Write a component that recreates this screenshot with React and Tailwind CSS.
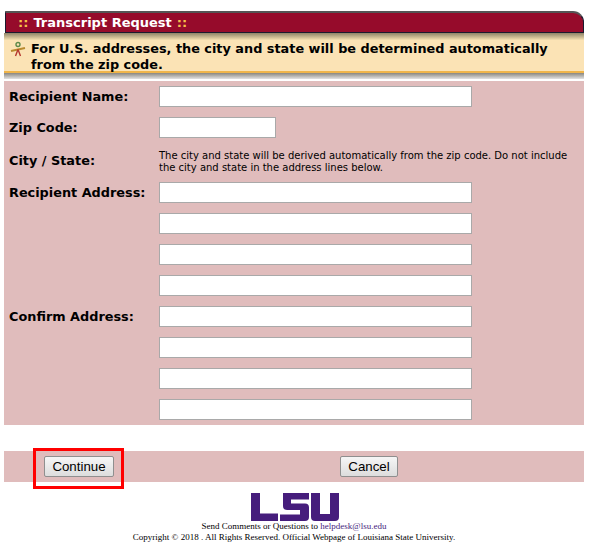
const verdana = { fontFamily: '"DejaVu Sans", Verdana, sans-serif' };

function Field({ label, short }) {
  return (
    <div className="flex items-center h-[21px]">
      <label className="w-[155px] pl-[5px] text-[12.85px] leading-[16px] font-bold text-black">
        {label}
      </label>
      <input
        type="text"
        className={`${short ? "w-[117px]" : "w-[313px]"} h-[21px] bg-white border border-[#a9a9a9]`}
      />
    </div>
  );
}

function HumanIcon() {
  return (
    <svg width="20" height="18" viewBox="0 0 20 18" className="shrink-0 mt-[1px]">
      <circle cx="10" cy="3.500" r="2" fill="none" stroke="#5c8a4a" strokeWidth="1.400" />
      <path d="M3 10 L17 7" stroke="#b98a2e" strokeWidth="1.800" />
      <path d="M10 8.500 L7.500 15 M10 8.500 L12.500 15" stroke="#b5382f" strokeWidth="1.400" fill="none" />
    </svg>
  );
}

function LsuLogo() {
  return (
    <svg width="89" height="28" viewBox="0 0 89 28" className="block">
      <g fill="#461d7c">
        <path d="M1 0h9v20.500h18v7.500H1z" />
        <path d="M33 0h26v6.500H41v4h14q4 0 4 4v9.500q0 4-4 4H30v-6.500h20v-4.500H37q-4 0-4-4z" />
        <path d="M61 0h9v21h10V0h9v24q0 4-4 4H65q-4 0-4-4z" />
      </g>
    </svg>
  );
}

export default function App() {
  return (
    <div className="w-[589px] h-[558px] bg-white overflow-hidden pt-[11px]" style={verdana}>
      <div className="ml-[5px] w-[579px] h-[22px] bg-[#960b2b] border border-[#1a1a2e] border-t-2 border-t-[#555] rounded-tr-[11px] flex items-center pl-[12px] text-[13px] font-bold text-white">
        <span className="text-[#f5c04a] mr-[5px]">::</span>
        Transcript Request
        <span className="text-[#f5c04a] ml-[5px]">::</span>
      </div>
      <div className="mx-[4px] w-[580px] h-[7px] bg-gradient-to-b from-[#8f8468] to-[#f5e0b0]" />
      <div className="mx-[4px] w-[580px] h-[33px] bg-[#fbe3b5] border-b-2 border-[#f0b54a] flex items-start pl-[4px]">
        <HumanIcon />
        <p className="ml-[3px] mt-[1px] text-[12.85px] leading-[16px] font-bold text-black">
          For U.S. addresses, the city and state will be determined automatically
          <br />
          from the zip code.
        </p>
      </div>
      <div className="mx-[4px] w-[580px] h-[6px] bg-gradient-to-b from-[#8a8780] to-[#e3e3e3]" />
      <div className="h-[2px]" />

      <div className="mx-[4px] w-[580px] h-[344px] bg-[#e0bcbc] pt-[5px] flex flex-col gap-[10px]">
        <Field label="Recipient Name:" />
        <Field label="Zip Code:" short />
        <div className="flex items-center h-[24px]">
          <label className="w-[155px] pl-[5px] pt-[2px] text-[12.85px] leading-[16px] font-bold text-black">
            City / State:
          </label>
          <p className="w-[420px] pt-[3px] text-[10px] leading-[12px] text-black">
            The city and state will be derived automatically from the zip code. Do not include the city and state in the address lines below.
          </p>
        </div>
        <Field label="Recipient Address:" />
        <Field />
        <Field />
        <Field />
        <Field label="Confirm Address:" />
        <Field />
        <Field />
        <Field />
      </div>

      <div className="mx-[4px] mt-[26px] w-[580px] h-[31px] bg-[#e0bcbc] flex items-start pt-[5px]" style={{ fontFamily: '"Liberation Sans", Arial, sans-serif' }}>
        <div className="relative ml-[40px] h-[21px]">
          <button className="block w-[70px] h-[21px] rounded-[2px] border border-[#8f8f8f] bg-gradient-to-b from-[#f6f6f6] to-[#dddddd] text-[13.3px] text-black">
            Continue
          </button>
          <div className="absolute left-[-11px] top-[-8px] w-[91px] h-[41px] border-[3px] border-[#ff0000]" />
        </div>
        <button className="ml-[226px] w-[58px] h-[21px] rounded-[2px] border border-[#8f8f8f] bg-gradient-to-b from-[#f6f6f6] to-[#dddddd] text-[13.3px] text-black">
          Cancel
        </button>
      </div>

      <div className="mt-[11px] flex flex-col items-center pr-[1px]" style={{ fontFamily: '"Liberation Serif", "Times New Roman", serif' }}>
        <LsuLogo />
        <p className="text-[9px] leading-[10.5px] text-black text-center">
          Send Comments or Questions to <a className="text-[#461d7c]">helpdesk@lsu.edu</a>
          <br />
          Copyright © 2018 . All Rights Reserved. Official Webpage of Louisiana State University.
        </p>
      </div>
    </div>
  );
}
